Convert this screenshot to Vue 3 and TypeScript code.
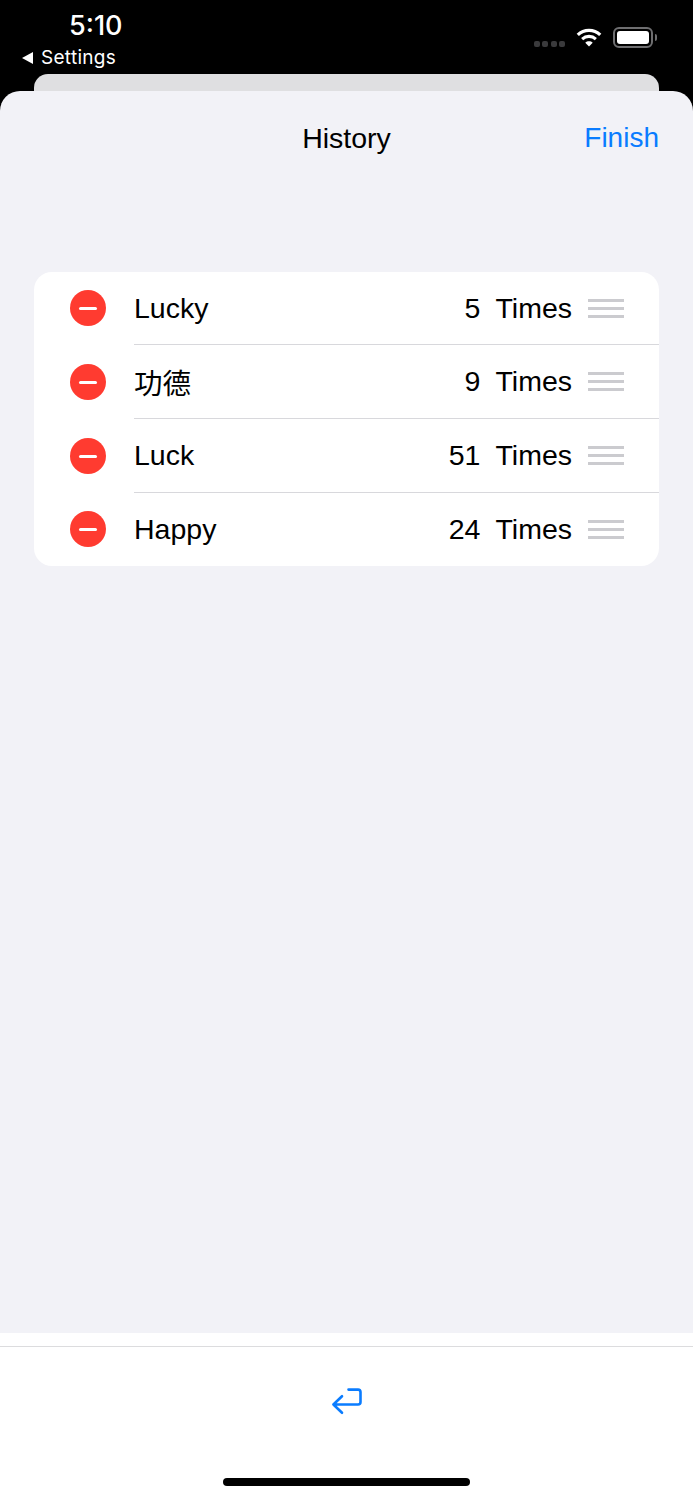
<template>
  <div class="screen">
    <header class="status-bar">
      <div class="status-left">
        <span class="clock">5:10</span>
        <span class="back-app"><i class="back-arrow"></i>Settings</span>
      </div>
      <div class="status-right">
        <span class="signal"><i v-for="n in 4" :key="n"></i></span>
        <svg class="wifi" width="26" height="19" viewBox="0 0 28 21" aria-hidden="true">
          <path d="M1.6 7.6C8.6 1 19.4 1 26.4 7.6" fill="none" stroke="#fff" stroke-width="3.6" stroke-linecap="butt" />
          <path d="M6.4 12.2C10.7 8.3 17.3 8.3 21.6 12.2" fill="none" stroke="#fff" stroke-width="3.4" />
          <path d="M14 20.5 9.9 16.2C12.2 14.2 15.8 14.2 18.1 16.2Z" fill="#fff" />
        </svg>
        <span class="battery"><i class="battery-level"></i></span>
        <i class="battery-cap"></i>
      </div>
    </header>

    <div class="back-sheet"></div>

    <main class="sheet">
      <div class="nav">
        <span class="nav-title">History</span>
        <span class="nav-action">Finish</span>
      </div>

      <ul class="list">
        <li v-for="item in items" :key="item.name" class="row">
          <span class="remove"><i></i></span>
          <div class="row-body">
            <span class="name">{{ item.name }}</span>
            <span class="count">{{ item.count }}</span>
            <span class="unit">Times</span>
            <span class="handle"><i></i><i></i><i></i></span>
          </div>
        </li>
      </ul>
    </main>

    <footer class="toolbar">
      <div class="toolbar-main">
        <svg width="32" height="28" viewBox="0 0 32 28" fill="none" aria-hidden="true">
          <path d="M17.5 1.6H27A2.5 2.5 0 0 1 29.5 4.1V14A2.5 2.5 0 0 1 27 16.5H2.4M11 8.2 2.4 16.5 11 24.8" stroke="#0a7cff" stroke-width="2.6" stroke-linecap="round" stroke-linejoin="round" />
        </svg>
      </div>
      <div class="home-indicator"></div>
    </footer>
  </div>
</template>

<script setup lang="ts">
const items = [
  { name: 'Lucky', count: 5 },
  { name: '功德', count: 9 },
  { name: 'Luck', count: 51 },
  { name: 'Happy', count: 24 }
]
</script>

<style>
html, body {
  margin: 0;
  background: #000;
}
</style>

<style scoped>
.screen {
  width: 693px;
  height: 1500px;
  display: flex;
  flex-direction: column;
  background: #000;
  overflow: hidden;
  font-family: "Liberation Sans", "Noto Sans CJK SC", sans-serif;
  color: #000;
}

.status-bar {
  height: 74px;
  flex: none;
  display: flex;
  justify-content: space-between;
  color: #fff;
  box-sizing: border-box;
}

.status-left {
  width: 130px;
  display: flex;
  flex-direction: column;
  align-items: flex-start;
  padding: 10px 0 0 22px;
  box-sizing: border-box;
  font-family: Inter, sans-serif;
}

.clock {
  margin-left: 47px;
  font-size: 27px;
  line-height: 32px;
  font-weight: 500;
}

.back-app {
  display: flex;
  align-items: center;
  gap: 8px;
  margin-top: 2px;
  font-size: 19px;
  line-height: 28px;
  letter-spacing: 0.3px;
}

.back-arrow {
  width: 0;
  height: 0;
  border-top: 6px solid transparent;
  border-bottom: 6px solid transparent;
  border-right: 11px solid #fff;
}

.status-right {
  display: flex;
  align-items: center;
  height: 74px;
  padding-right: 36px;
}

.signal {
  display: flex;
  gap: 2.3px;
  margin-right: 11px;
  margin-top: 14px;
}

.signal i {
  width: 6px;
  height: 6px;
  border-radius: 2px;
  background: #3a3a3c;
}

.wifi {
  margin-right: 11px;
}

.battery {
  width: 40px;
  height: 21px;
  box-sizing: border-box;
  border: 2px solid #6e6e70;
  border-radius: 6px;
  padding: 2px;
  display: flex;
}

.battery-level {
  flex: 1;
  background: #fff;
  border-radius: 3px;
}

.battery-cap {
  width: 2px;
  height: 7px;
  margin-left: 2px;
  background: #6e6e70;
  border-radius: 0 2px 2px 0;
}

.back-sheet {
  height: 17px;
  flex: none;
  margin: 0 34px;
  background: #dfdfe1;
  border-radius: 14px 14px 0 0;
}

.sheet {
  height: 1242px;
  flex: none;
  background: #f2f2f7;
  border-radius: 20px 20px 0 0;
}

.nav {
  position: relative;
  height: 94px;
  display: flex;
  align-items: center;
  justify-content: center;
}

.nav-title {
  font-size: 28.5px;
  line-height: 94px;
}

.nav-action {
  position: absolute;
  right: 34px;
  font-size: 28px;
  line-height: 94px;
  color: #0a7cff;
}

.list {
  list-style: none;
  margin: 87px 34px 0;
  padding: 0;
  background: #fff;
  border-radius: 18px;
  overflow: hidden;
}

.row {
  height: 74px;
  display: flex;
  align-items: stretch;
  font-size: 28.5px;
}

.row:first-child,
.row:last-child {
  height: 73px;
}

.remove {
  flex: none;
  align-self: center;
  width: 36px;
  height: 36px;
  margin: 0 28px 0 36px;
  border-radius: 50%;
  background: #ff3b30;
  display: flex;
  align-items: center;
  justify-content: center;
}

.row:first-child .remove,
.row:last-child .remove {
  margin-bottom: 1px;
}

.remove i {
  width: 18px;
  height: 3px;
  border-radius: 2px;
  background: #fff;
}

.row-body {
  flex: 1;
  display: flex;
  align-items: center;
  padding-right: 35px;
  border-bottom: 1px solid #d8d8dc;
}

.row:last-child .row-body {
  border-bottom: 0;
}

.name {
  flex: 1;
}

.unit {
  margin-left: 15px;
}

.handle {
  width: 36px;
  margin-left: 16px;
  display: flex;
  flex-direction: column;
  gap: 5px;
}

.handle i {
  height: 3px;
  background: #cbcbcf;
}

.toolbar {
  flex: 1;
  background: #fff;
  position: relative;
}

.toolbar-main {
  margin-top: 13px;
  border-top: 1px solid #dcdcde;
  height: 110px;
  display: flex;
  align-items: center;
  justify-content: center;
}

.home-indicator {
  position: absolute;
  left: 223px;
  bottom: 14px;
  width: 247px;
  height: 8px;
  background: #000;
  border-radius: 4px;
}
</style>
